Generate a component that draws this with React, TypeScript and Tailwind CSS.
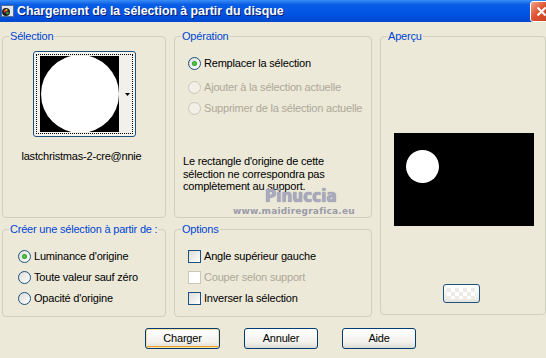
import clsx from "clsx";

const font = "font-['Tahoma','Liberation_Sans',Arial,sans-serif]";

const Radio = ({ checked, disabled }: { checked?: boolean; disabled?: boolean }) => (
  <span
    className={clsx(
      "flex h-[13px] w-[13px] shrink-0 items-center justify-center rounded-full border",
      disabled
        ? "border-[#cac8bb] bg-[#f1efe6]"
        : "border-[#1c5180] bg-[linear-gradient(135deg,#dcdcd7,#ffffff)]"
    )}
  >
    {checked && <span className="h-[5px] w-[5px] rounded-full bg-[radial-gradient(circle,#55d34a,#1a8a1a)]" />}
  </span>
);

const Check = ({ disabled }: { disabled?: boolean }) => (
  <span
    className={clsx(
      "h-[13px] w-[13px] shrink-0 border",
      disabled
        ? "border-[#cac8bb] bg-white"
        : "border-[#1c5180] bg-[linear-gradient(135deg,#dcdcd7,#ffffff)]"
    )}
  />
);

const Option = ({
  control,
  label,
  disabled,
  className,
}: {
  control: React.ReactNode;
  label: string;
  disabled?: boolean;
  className?: string;
}) => (
  <div className={clsx("flex h-[13px] items-center gap-[3px]", className)}>
    {control}
    <span className={clsx("whitespace-nowrap", disabled ? "text-[#aca899]" : "text-black")}>{label}</span>
  </div>
);

const Group = ({
  title,
  className,
  children,
}: {
  title: string;
  className?: string;
  children?: React.ReactNode;
}) => (
  <fieldset className={clsx("rounded-[4px] border border-[#d0d0bf] px-0 pb-0", className)}>
    <legend className="ml-[6px] whitespace-nowrap px-[1px] leading-[13px] text-[#0046d5]">{title}</legend>
    {children}
  </fieldset>
);

const XpButton = ({ label, primary, className }: { label: string; primary?: boolean; className?: string }) => (
  <button
    className={clsx(
      "flex h-[21px] w-[74px] items-center justify-center rounded-[3px] border border-[#003c74] bg-[linear-gradient(#ffffff,#f2f1ec_70%,#dcdbd2)] text-black",
      primary && "shadow-[inset_0_0_0_1px_#fbe09e,inset_0_-2px_0_0_#f0a12b]",
      className
    )}
  >
    {label}
  </button>
);

export default function App() {
  return (
    <div className={clsx("flex h-[358px] w-[546px] flex-col overflow-hidden bg-[#ece9d8] text-[11px] tracking-[-0.2px]", font)}>
      {/* title bar */}
      <div className="flex h-[22px] shrink-0 items-center bg-[linear-gradient(#3b8df5,#0a5fe6_20%,#0054e3_60%,#0048d0)]">
        <svg width="14" height="14" viewBox="0 0 14 14" className="ml-[1px]">
          <rect x="0.5" y="1.5" width="12" height="11" fill="#dfe6ef" stroke="#5a6f8a" />
          <circle cx="5" cy="8" r="4" fill="#222" />
          <circle cx="4" cy="7" r="1.5" fill="#e0302a" />
          <circle cx="6.5" cy="9" r="1.3" fill="#37a340" />
          <circle cx="5.5" cy="6" r="1.1" fill="#f2c230" />
        </svg>
        <span className="ml-[2px] font-['Trebuchet_MS','Liberation_Sans',Arial,sans-serif] text-[12.3px] font-bold tracking-[0px] text-white [text-shadow:1px_1px_0_#0a1f6e]">
          Chargement de la sélection à partir du disque
        </span>
        <div className="ml-auto mr-[-6px] flex h-[21px] w-[22px] items-center justify-center rounded-[3px] border border-white bg-[linear-gradient(135deg,#f0a58a,#e1522f_45%,#c0401f)]">
          <svg width="11" height="11" viewBox="0 0 11 11">
            <path d="M1.5 1.5 L9.5 9.5 M9.5 1.5 L1.5 9.5" stroke="white" strokeWidth="2" />
          </svg>
        </div>
      </div>

      {/* body */}
      <div className="ml-[2px] mt-[8px] grid grid-cols-[164px_198px_166px] grid-rows-[188px_94px] gap-x-[8px] gap-y-[5px]">
        <Group title="Sélection" className="h-[188px]">
          <div className="flex flex-col items-center">
            <div className="mt-[8px] ml-[1px] flex h-[86px] w-[103px] rounded-[3px] border border-[#1c5180] bg-[#f4f3ee] p-[2px]">
              <div className="flex flex-1 border border-dotted border-black bg-[#f1f0ea] py-[1px] pl-[3px]">
                <div className="flex h-full w-[79px] items-center justify-center overflow-hidden bg-black">
                  <div className="h-[78px] w-[78px] shrink-0 rounded-full bg-white" />
                </div>
                <div className="flex flex-1 items-center justify-end pr-[2px]">
                  <svg width="5" height="3" viewBox="0 0 5 3">
                    <path d="M0 0 H5 L2.5 3 Z" fill="black" />
                  </svg>
                </div>
              </div>
            </div>
            <div className="mt-[11px] mr-[5px] text-black">lastchristmas-2-cre@nnie</div>
          </div>
        </Group>

        <Group title="Opération" className="relative h-[188px]">
          <div className="ml-[13px] mt-[14px] flex flex-col">
            <Option control={<Radio checked />} label="Remplacer la sélection" />
            <Option control={<Radio disabled />} label="Ajouter à la sélection actuelle" disabled className="mt-[11px]" />
            <Option control={<Radio disabled />} label="Supprimer de la sélection actuelle" disabled className="mt-[8px]" />
          </div>
          <p className="ml-[8px] mt-[40px] leading-[12.5px] text-black">
            Le rectangle d'origine de cette
            <br />
            sélection ne correspondra pas
            <br />
            complètement au support.
          </p>
          {/* watermark */}
          <span className="absolute left-[90px] top-[143px] font-['DejaVu_Sans_Condensed','DejaVu_Sans',sans-serif] text-[17px] font-bold leading-[20px] tracking-[0px] text-[#a9a9bf] [text-shadow:0_0_1px_#6e6e88]">
            Pinuccia
          </span>
          <span className="absolute left-[58px] top-[163px] font-['DejaVu_Sans',sans-serif] text-[9px] font-bold leading-[11px] tracking-[0.2px] text-[#9a9aa8]">
            www.maidiregrafica.eu
          </span>
        </Group>

        <Group title="Aperçu" className="row-span-2 h-[285px]">
          <div className="ml-[13px] mt-[90px] flex h-[93px] w-[140px] items-start bg-black pl-[12px] pt-[17px]">
            <div className="h-[33px] w-[33px] rounded-full bg-white" />
          </div>
          <div className="mt-[58px] flex justify-center pr-[4px]">
            <div className="h-[19px] w-[37px] rounded-[3px] border border-[#1c5180] bg-[linear-gradient(#ffffff,#f2f1ec_60%,#e4e3dc)] p-[3px]">
              <div className="h-full w-full bg-[repeating-conic-gradient(#ffffff_0_25%,#ecebe6_0_50%)] bg-[length:8px_8px]" />
            </div>
          </div>
        </Group>

        <Group title="Créer une sélection à partir de :" className="h-[94px]">
          <div className="ml-[15px] mt-[14px] flex flex-col gap-[8px]">
            <Option control={<Radio checked />} label="Luminance d'origine" />
            <Option control={<Radio />} label="Toute valeur sauf zéro" />
            <Option control={<Radio />} label="Opacité d'origine" />
          </div>
        </Group>

        <Group title="Options" className="h-[94px]">
          <div className="ml-[13px] mt-[14px] flex flex-col gap-[8px]">
            <Option control={<Check />} label="Angle supérieur gauche" />
            <Option control={<Check disabled />} label="Couper selon support" disabled />
            <Option control={<Check />} label="Inverser la sélection" />
          </div>
        </Group>
      </div>

      <div className="ml-[145px] mt-[11px] flex gap-[24px]">
        <XpButton label="Charger" primary className="w-[75px]" />
        <XpButton label="Annuler" />
        <XpButton label="Aide" />
      </div>
    </div>
  );
}
